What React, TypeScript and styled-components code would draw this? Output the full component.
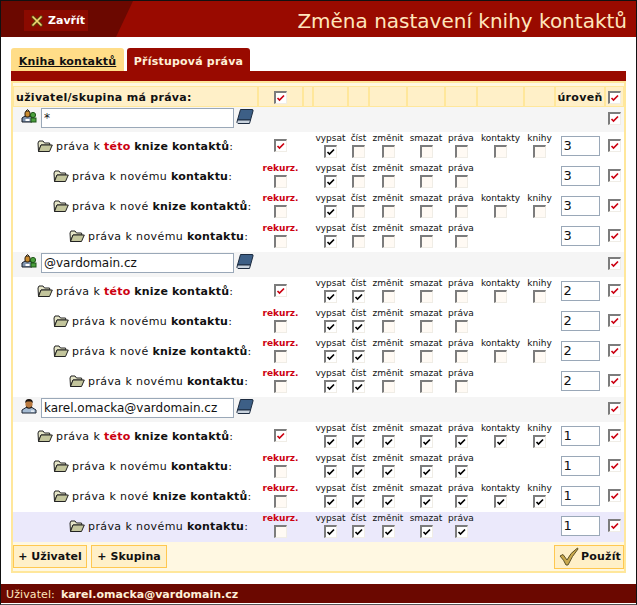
import React from 'react';
import styled, { createGlobalStyle } from 'styled-components';

const GRID = '245px 45px 10px 35px 21px 38px 38px 32px 47px 31px 50px 19px';
const FONT = '"DejaVu Sans", Verdana, sans-serif';

const GlobalStyle = createGlobalStyle`
    html, body {
        margin: 0;
        background: #fff;
    }
    body {
        font-family: ${FONT};
        font-size: 12px;
        color: #111;
    }
`;

const Frame = styled.div`
    box-sizing: border-box;
    width: 637px;
    height: 605px;
    border: 1px solid #111;
    border-bottom-color: #555;
    display: flex;
    flex-direction: column;
    background: #fff;
`;

const Header = styled.header`
    position: relative;
    box-sizing: border-box;
    height: 36px;
    flex: none;
    background: #990a00;
    display: flex;
    align-items: center;
    justify-content: space-between;
    padding: 3px 9px 0 23px;

    &::before {
        content: '';
        position: absolute;
        inset: 0;
        width: 132px;
        background: #6b0800;
        clip-path: polygon(0 0, 100% 0, 115px 100%, 0 100%);
    }
`;

const CloseButton = styled.button`
    position: relative;
    display: flex;
    align-items: center;
    gap: 5px;
    box-sizing: border-box;
    width: 64px;
    height: 21px;
    padding: 0 0 0 7px;
    border: 0;
    background: #8a0a00;
    color: #fff;
    font: bold 11px ${FONT};
`;

const Title = styled.h1`
    margin: 0;
    color: #ffe6bd;
    font: normal 20px ${FONT};
    white-space: nowrap;
`;

const Content = styled.main`
    flex: 1;
    padding: 11px 10px 11px 10px;
    display: flex;
    flex-direction: column;
`;

const Tabs = styled.nav`
    display: flex;
    gap: 3px;
    height: 23px;
`;

const Tab = styled.a<{ $active?: boolean }>`
    display: flex;
    align-items: center;
    justify-content: center;
    box-sizing: border-box;
    width: ${(p) => (p.$active ? '123px' : '113px')};
    padding-top: 3px;
    border-radius: 3px 3px 0 0;
    background: ${(p) => (p.$active ? '#990a00' : '#ffdd88')};
    color: ${(p) => (p.$active ? '#fff0d8' : '#111')};
    font-weight: bold;
    font-size: 11px;
    letter-spacing: 0.2px;
    text-decoration: ${(p) => (p.$active ? 'none' : 'underline')};
`;

const Strip = styled.div`
    height: 10px;
    background: #990a00;
`;

const Panel = styled.section`
    box-sizing: border-box;
    height: 492px;
    border: 2px solid #ffe79b;
    background: #fff8e2;
    padding-top: 3px;
`;

const Row = styled.div<{ $hl?: boolean }>`
    display: grid;
    grid-template-columns: ${GRID};
    height: 30px;
    background: ${(p) => (p.$hl ? '#ebe9fb' : '#fff')};
`;

const HeadRow = styled.div`
    display: grid;
    grid-template-columns: ${GRID};
    height: 21px;
`;

const HeadCell = styled.div<{ $end?: boolean }>`
    box-sizing: border-box;
    display: flex;
    align-items: center;
    justify-content: ${(p) => (p.$end ? 'center' : 'flex-start')};
    border: 1px solid #ffe79b;
    background: #fff0c8;
    padding: 1px 2px 0;
    font-weight: bold;
    font-size: 11px;
    letter-spacing: 0.3px;
    white-space: nowrap;
`;

const GroupRow = styled.div`
    display: grid;
    grid-template-columns: 1fr 19px;
    height: 25px;
    background: #f5f5f5;
`;

const GroupCell = styled.div`
    display: flex;
    align-items: flex-start;
    padding: 1px 0 0 8px;
`;

const TextInput = styled.input`
    box-sizing: border-box;
    width: 193px;
    height: 20px;
    margin: 0 2px 0 4px;
    padding: 0 2px;
    border: 1px solid #9aa8b8;
    background: #fff;
    color: #111;
    font: 12px ${FONT};
`;

const NameCell = styled.div<{ $indent: number }>`
    display: flex;
    align-items: center;
    gap: 3px;
    padding: 0 0 2px ${(p) => p.$indent}px;
    font-size: 11px;
    letter-spacing: 0.4px;
    white-space: nowrap;

    b {
        font-weight: bold;
        letter-spacing: 0.2px;
    }
`;

const Hot = styled.b`
    color: #cc0011;
`;

const PermCell = styled.div`
    display: flex;
    flex-direction: column;
    align-items: center;
    padding-top: 1px;
`;

const PermLabel = styled.span`
    height: 10px;
    line-height: 10px;
    margin-bottom: 2px;
    font-size: 9px;
    white-space: nowrap;
`;

const RekurzLabel = styled(PermLabel)`
    color: #cc0011;
    font-weight: bold;
`;

const MidCell = styled.div`
    display: flex;
    align-items: center;
    justify-content: center;
    padding-bottom: 3px;
`;

const LevelInput = styled.input`
    box-sizing: border-box;
    width: 39px;
    height: 20px;
    padding: 0 2px;
    border: 1px solid #9aa8b8;
    background: #fff;
    color: #111;
    font: 13px ${FONT};
`;

const Box = styled.span<{ $light?: boolean }>`
    box-sizing: border-box;
    display: block;
    width: 13px;
    height: 13px;
    border-style: solid;
    border-width: 2px 1px 1px 2px;
    border-color: #7c7c7c #f0ede6 #f0ede6 #7c7c7c;
    background: ${(p) => (p.$light ? '#fffaf4' : '#fff')};
`;

const Actions = styled.div`
    display: flex;
    align-items: center;
    gap: 4px;
    height: 29px;
`;

const ActionButton = styled.button<{ $width: number }>`
    box-sizing: border-box;
    width: ${(p) => p.$width}px;
    height: 23px;
    padding: 0;
    border: 1px solid #ffc850;
    background: #fff0c8;
    color: #111;
    font: bold 11px ${FONT};
    letter-spacing: 0.05px;
    white-space: nowrap;
`;

const ApplyButton = styled(ActionButton)`
    display: flex;
    align-items: center;
    gap: 2px;
    height: 24px;
    margin-left: auto;
    padding: 0 0 0 4px;
    letter-spacing: 0.2px;
`;

const Footer = styled.footer`
    box-sizing: border-box;
    height: 19px;
    flex: none;
    margin-bottom: 1px;
    display: flex;
    align-items: center;
    gap: 6px;
    padding: 1px 0 0 5px;
    background: #6b0800;
    color: #ffe6bd;
    font-size: 11px;
    letter-spacing: 0.1px;

    b {
        color: #fff0d8;
        letter-spacing: 0;
    }
`;

function Check({ color }: { color: string }) {
    return (
        <svg width="10" height="10" viewBox="0 0 10 10" style={{ display: 'block' }}>
            <path d="M1.5 5 L3.5 7 L8 2.5" fill="none" stroke={color} strokeWidth="1.7" />
        </svg>
    );
}

function Tick({ on, red, light }: { on?: boolean; red?: boolean; light?: boolean }) {
    return <Box $light={light && !on}>{on && <Check color={red ? '#cc0011' : '#000'} />}</Box>;
}

function FolderIcon() {
    return (
        <svg width="16" height="13" viewBox="0 0 16 13" style={{ flex: 'none' }}>
            <path d="M1 3 L2 1 H6 L7.5 3 H12.5 L13 5 H4 L1.5 11.5 Z" fill="#e6e6c8" stroke="#222" strokeWidth="1" />
            <path d="M1.5 11.5 L4 5 H15.3 L12.5 11.5 Z" fill="#c3c59c" stroke="#222" strokeWidth="1" />
        </svg>
    );
}

function GroupIcon() {
    return (
        <svg width="16" height="16" viewBox="0 0 16 16" style={{ flex: 'none' }}>
            <path d="M1 14 V10 L4 8 H9 L11 10 V14 Z" fill="#7f93ad" stroke="#141a26" />
            <rect x="4" y="3" width="5" height="6" rx="2" fill="#c98a2e" stroke="#2c2010" />
            <path d="M5 3 Q6.5 0 8 3" fill="none" stroke="#2c2010" />
            <rect x="4.5" y="11" width="4" height="2" fill="#fff" />
            <circle cx="12" cy="7" r="2.6" fill="#4aa03c" stroke="#1f5518" />
            <rect x="10" y="10" width="5" height="4" fill="#4aa03c" stroke="#1f5518" />
        </svg>
    );
}

function UserIcon() {
    return (
        <svg width="16" height="16" viewBox="0 0 16 16" style={{ flex: 'none' }}>
            <path d="M1 15 V12 L5 9.5 H11 L15 12 V15 Z" fill="#a5bbd2" stroke="#1c2433" />
            <ellipse cx="8" cy="6" rx="3.6" ry="4" fill="#b9793f" />
            <path d="M4.2 5 Q4 1 8 1 Q12 1 11.8 5 L10 3.6 H6 Z" fill="#1a1410" />
            <path d="M5 8 Q8 11.5 11 8 L10.5 10 Q8 11.5 5.5 10 Z" fill="#1a1410" />
            <rect x="10" y="12.5" width="3" height="1.2" fill="#fff" />
        </svg>
    );
}

function BookIcon() {
    return (
        <svg width="18" height="17" viewBox="0 0 18 17" style={{ flex: 'none' }}>
            <path d="M4.5 1.5 H16 Q17.5 1.5 17 3 L14.5 12 H1.5 Z" fill="#3d5f86" stroke="#1d2c40" />
            <path d="M1.5 12 Q0 15 2 15.5 H13.5 L14.5 12 Z" fill="#c9d3de" stroke="#1d2c40" />
        </svg>
    );
}

function CloseIcon() {
    return (
        <svg width="12" height="12" viewBox="0 0 12 12" style={{ flex: 'none' }}>
            <path d="M2 2 L10 10 M10 2 L2 10" stroke="#5c4a12" strokeWidth="3.4" strokeLinecap="round" />
            <path d="M2 2 L10 10 M10 2 L2 10" stroke="#f3d873" strokeWidth="1.7" strokeLinecap="round" />
        </svg>
    );
}

function ApplyIcon() {
    return (
        <svg width="20" height="19" viewBox="0 0 20 19" style={{ flex: 'none' }}>
            <path
                d="M1 9 L4 7.5 L8 13 Q11 6 18.5 1 L19 2 Q13 9 9 18 H7 Q5 13 1 9 Z"
                fill="#c9a94d"
                stroke="#5f5226"
                strokeWidth="1"
            />
        </svg>
    );
}

const PERMS = ['vypsat', 'číst', 'změnit', 'smazat', 'práva', 'kontakty', 'knihy'];

type RowDef = { indent: number; book: boolean; top: boolean; name: React.ReactNode };

const ROWS: RowDef[] = [
    {
        indent: 24,
        book: true,
        top: true,
        name: (
            <>
                práva k <Hot>této</Hot> <b>knize kontaktů</b>:
            </>
        ),
    },
    {
        indent: 40,
        book: false,
        top: false,
        name: (
            <>
                práva k novému <b>kontaktu</b>:
            </>
        ),
    },
    {
        indent: 40,
        book: true,
        top: false,
        name: (
            <>
                práva k nové <b>knize kontaktů</b>:
            </>
        ),
    },
    {
        indent: 56,
        book: false,
        top: false,
        name: (
            <>
                práva k novému <b>kontaktu</b>:
            </>
        ),
    },
];

const GROUPS = [
    { value: '*', level: '3', checked: 1, user: false },
    { value: '@vardomain.cz', level: '2', checked: 2, user: false },
    { value: 'karel.omacka@vardomain.cz', level: '1', checked: 7, user: true },
];

function PermRow({ def, checked, level, hl }: { def: RowDef; checked: number; level: string; hl?: boolean }) {
    return (
        <Row $hl={hl}>
            <NameCell $indent={def.indent}>
                <FolderIcon />
                <span>{def.name}</span>
            </NameCell>
            {def.top ? (
                <MidCell>
                    <Tick on red />
                </MidCell>
            ) : (
                <PermCell>
                    <RekurzLabel>rekurz.</RekurzLabel>
                    <Tick light />
                </PermCell>
            )}
            <div />
            {PERMS.map((perm, i) =>
                i < 5 || def.book ? (
                    <PermCell key={perm}>
                        <PermLabel>{perm}</PermLabel>
                        <Tick on={i < checked} light />
                    </PermCell>
                ) : (
                    <div key={perm} />
                ),
            )}
            <MidCell>
                <LevelInput defaultValue={level} />
            </MidCell>
            <MidCell>
                <Tick on red />
            </MidCell>
        </Row>
    );
}

export default function App() {
    return (
        <Frame>
            <GlobalStyle />
            <Header>
                <CloseButton>
                    <CloseIcon />
                    Zavřít
                </CloseButton>
                <Title>Změna nastavení knihy kontaktů</Title>
            </Header>
            <Content>
                <Tabs>
                    <Tab>Kniha kontaktů</Tab>
                    <Tab $active>Přístupová práva</Tab>
                </Tabs>
                <Strip />
                <Panel>
                    <HeadRow>
                        <HeadCell>uživatel/skupina má práva:</HeadCell>
                        <HeadCell $end>
                            <Tick on red />
                        </HeadCell>
                        <HeadCell />
                        {PERMS.map((perm) => (
                            <HeadCell key={perm} />
                        ))}
                        <HeadCell $end>úroveň</HeadCell>
                        <HeadCell $end>
                            <Tick on red />
                        </HeadCell>
                    </HeadRow>
                    {GROUPS.map((group, g) => (
                        <React.Fragment key={group.value}>
                            <GroupRow>
                                <GroupCell>
                                    {group.user ? <UserIcon /> : <GroupIcon />}
                                    <TextInput defaultValue={group.value} />
                                    <BookIcon />
                                </GroupCell>
                                <MidCell>
                                    <Tick on red />
                                </MidCell>
                            </GroupRow>
                            {ROWS.map((def, r) => (
                                <PermRow
                                    key={r}
                                    def={def}
                                    checked={group.checked}
                                    level={group.level}
                                    hl={g === 2 && r === 3}
                                />
                            ))}
                        </React.Fragment>
                    ))}
                    <Actions>
                        <ActionButton $width={74}>+ Uživatel</ActionButton>
                        <ActionButton $width={76}>+ Skupina</ActionButton>
                        <ApplyButton $width={70}>
                            <ApplyIcon />
                            Použít
                        </ApplyButton>
                    </Actions>
                </Panel>
            </Content>
            <Footer>
                <span>Uživatel:</span>
                <b>karel.omacka@vardomain.cz</b>
            </Footer>
        </Frame>
    );
}
